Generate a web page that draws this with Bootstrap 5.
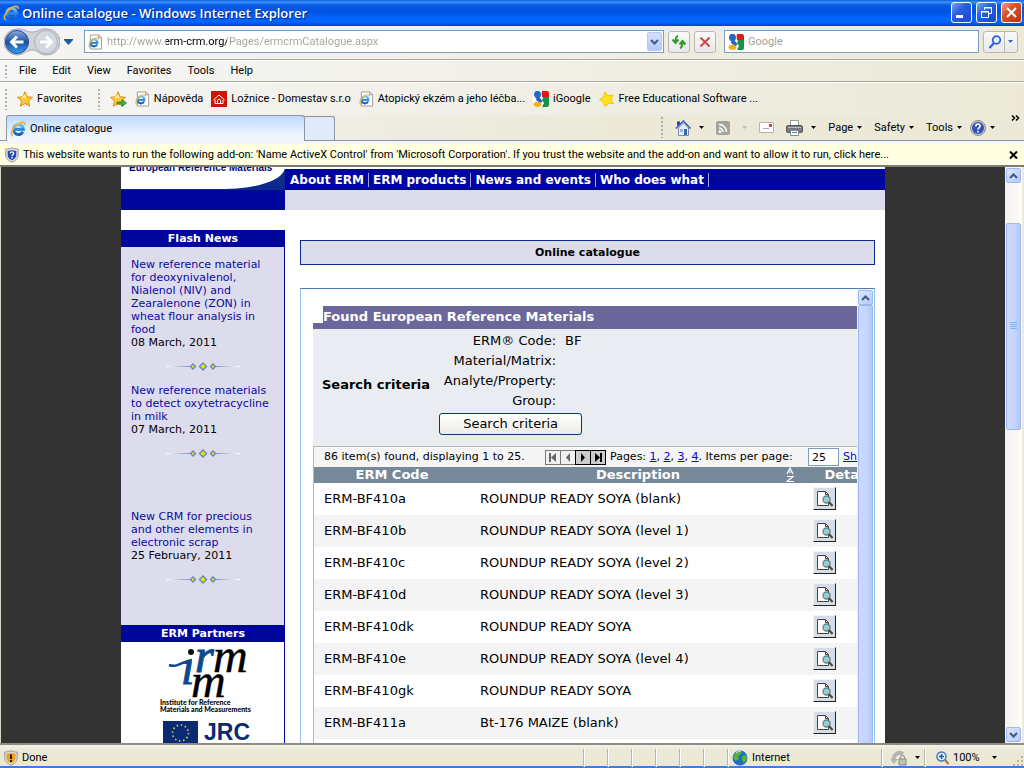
<!DOCTYPE html>
<html lang="en">
<head>
<meta charset="utf-8">
<meta name="viewport" content="width=device-width, initial-scale=1">
<title>Online catalogue - Windows Internet Explorer</title>
<link href="https://cdn.jsdelivr.net/npm/bootstrap@5.3.0/dist/css/bootstrap.min.css" rel="stylesheet">
<style>
:root { --navy:#00069c; --lav:#dddced; --ui:Roboto,sans-serif; --web:"DejaVu Sans",sans-serif; }
body { font-family:var(--ui); font-size:11px; line-height:14px; color:#000; background:#ece9d8; }
svg { display:block; flex:none; }
button { font:inherit; color:inherit; background:none; border:0; padding:0; flex:none; }
.win { height:100vh; min-width:1000px; }
.titlebar { height:26px; padding:0 2px 1px 3px; background:linear-gradient(#0a5be0 0,#3a93ff 2px,#0a5ae6 5px,#0053e1 12px,#0062fb 17px,#0066ff 22px,#0040c8 26px); color:#fff; }
.titlebar h1 { font:600 13px/18px "Open Sans",sans-serif; text-shadow:1px 1px 1px #00248c; margin:0 auto 0 3px; }
.cap { width:21px; height:21px; border:1px solid #fff; border-radius:3px; background:linear-gradient(135deg,#7fa4f4,#2a5fe0 40%,#1a48c8); }
.cap.shut { background:linear-gradient(135deg,#f0a08a,#dd5028 40%,#b8320c); }
.addrbar { height:34px; padding:0 6px 2px 4px; background:linear-gradient(90deg,#f4f4f4,#ece9d8); border-bottom:1px solid #a9a798; }
.hist { margin:0 11px 0 4px; }
.field { height:23px; border:1px solid #7f9db9; background:#fff; padding:0 1px 0 3px; }
.field input { border:0; outline:0; padding:0; min-width:0; font-size:11px; height:19px; }
.url { color:transparent; background:linear-gradient(90deg,#a5a294 59px,#000 59px,#000 120px,#a5a294 120px); -webkit-background-clip:text; background-clip:text; }
.search { width:255px; }
.search input::placeholder { color:#a5a294; opacity:1; }
.drop { width:15px; height:19px; border:1px solid #b8c8f4; border-radius:2px; background:linear-gradient(#d5e1fd,#b5c9f9); }
.tool { height:22px; min-width:22px; border:1px solid #b9b9b4; border-radius:3px; background:linear-gradient(#fafafa,#e8e8ea); }
.menubar { height:22px; padding-left:5px; border-top:1px solid #fff; border-bottom:1px solid #a9a798; background:linear-gradient(90deg,#f6f6f6,#ece9d8); }
.menubar a, .favs a, .cmds button { color:#000; text-decoration:none; }
.grip { width:2px; height:21px; flex:none; background:repeating-linear-gradient(#b0aea2 0 2px,transparent 2px 4px); }
.menubar .grip { height:13px; margin-right:-4px; }
.favs { height:33px; padding:0 5px; border-top:1px solid #fff; background:linear-gradient(90deg,#f5f5f4,#ece9d8); }
.favs .grip { margin-right:2px; }
.tabs { height:26px; padding-left:6px; border-bottom:1px solid #8e95a6; background:linear-gradient(90deg,#f3f3f2,#ece9d8 60%); }
.tab1 { width:299px; border:1px solid #8e95a6; border-bottom:0; border-radius:3px 3px 0 0; background:linear-gradient(#bedafc,#eef5fe 80%,#f4f7fc); padding-left:3px; margin-bottom:-1px; }
.tab2 { width:30px; border:1px solid #8e95a6; border-left:0; border-bottom:0; border-radius:0 3px 0 0; background:#e0ebfa; margin-top:1px; }
.cmds { padding-right:3px; }
.infobar { height:23px; margin-top:3px; padding:0 6px 0 5px; background:#ffffe1; border-bottom:2px solid #7e7c70; }
.band { background:#f4f4fa; }
.view { background:#333; border-left:1px solid #d8d5c6; border-right:2px solid #ece9d8; min-height:0; }
.site { width:764px; background:#fff; font-family:var(--web); overflow:hidden; }
.side { width:164px; flex:none; }
.logo { height:23px; overflow:hidden; color:#000a78; font:bold 10px/12px "Liberation Sans",sans-serif; background:#0a2a8e; }
.logo div { margin-top:-5px; height:27px; padding:0 0 0 8px; background:#fff; border-radius:0 0 60px 0 / 0 0 22px 0; white-space:nowrap; }
.navy { background:var(--navy); }
.lav { background:var(--lav); }
.h20 { height:20px; }
.topnav { height:21px; margin-top:2px; padding-left:1px; font-weight:bold; font-size:12px; line-height:14px; }
.topnav a { color:#fff; text-decoration:none; padding:0 4px; border-right:1px solid #a0a0d8; }
.head { font-weight:bold; font-size:11px; line-height:17px; color:#fff; text-align:center; margin:0; }
.boxed { border-right:1px solid var(--navy); }
.news { height:378px; padding:11px 10px 0; line-height:13px; }
.news a { color:#0a0aa0; text-decoration:none; display:block; }
.news svg { margin:13px auto; }
.news .older { padding-top:39px; }
.ctitle { margin-top:30px; height:25px; border:1px solid #0a2a8e; font-size:11px; line-height:23px; font-weight:bold; text-align:center; }
.pane { margin:0 10px 0 15px; min-width:0; }
.frame { margin-top:23px; border:1px solid #99c0f7; border-top-color:#4a7ab8; border-bottom:0; min-height:0; }
.inner { padding:17px 0 0 12px; overflow:hidden; min-width:0; font-size:13px; }
.inner h3 { background:#6b679b; color:#fff; font-size:13px; font-weight:bold; line-height:22px; height:23px; margin:0; border-left:10px solid #6b679b; border-image:linear-gradient(#fff 17px,#6b679b 17px) 0 0 0 10; }
.crit { background:#e9ecf1; height:117px; padding:0 0 10px 9px; gap:9px; }
.crit strong { padding-top:4px; }
.crit dl { display:grid; grid-template-columns:117px auto; column-gap:9px; line-height:20px; margin:0; text-align:right; }
.crit dt { font-weight:normal; } .crit dd { margin:0; text-align:left; }
.crit button { width:143px; height:22px; border:1px solid #003c74; border-radius:3px; background:linear-gradient(#fff,#ecebe5); margin-top:2px; }
.grid-wrap { width:584px; border:1px solid #b8b8b8; border-right:0; }
.pager { height:20px; background:#f5f5f5; font-size:11px; padding-left:10px; white-space:nowrap; }
.pager .found { width:221px; }
.pager label { width:200px; padding-left:5px; }
.pager .pb { width:16px; height:15px; border:1px solid #777; background:#f0f0f0; margin-right:-1px; color:#666; }
.pager .pb.on { border-color:#000; background:#ccc; color:#000; }
.pager a { color:#00f; }
.pager input { width:31px; height:18px; border:1px solid #7f9db9; font-size:11px; padding:0 3px; margin:0 4px 0 3px; }
.res { width:583px; table-layout:fixed; border-collapse:collapse; }
.res th { background:#778899; color:#fff; height:16px; line-height:16px; padding:0; text-align:center; }
.res td { height:32px; padding:0 10px; line-height:16px; }
.res tbody tr:nth-child(even) { background:#f4f4f4; }
.zoom { width:23px; height:23px; display:block; background:#d5dde6; border:1px solid; border-color:#f4f4f4 #222 #222 #f4f4f4; margin-top:-2px; }
.sb { width:17px; background:linear-gradient(90deg,#f3f1ec,#fefefb); padding:1px; flex:none; }
.sb .end { width:15px; height:15px; border:1px solid #9db8ee; border-radius:2px; background:linear-gradient(135deg,#dde7fe,#b4cbfb); }
.sb .thumb { border:1px solid #9db8ee; border-radius:2px; background:linear-gradient(90deg,#ccd9fe,#c4d5fd 60%,#b0c8fa); }
.frame .sb { padding-bottom:0; }
.frame .thumb { border-bottom:0; border-radius:2px 2px 0 0; }
.status { height:25px; padding-top:4px; border-top:2px solid #8e8c80; border-bottom:2px solid #3b7edb; background:linear-gradient(#f3f1e6,#ebe8d7 6px); }
.cell { width:24px; height:18px; border-left:1px solid #b8b5a4; flex:none; box-shadow:inset 1px 0 #fff; }
.zone { width:154px; } .prot { width:43px; } .zm { width:100px; padding-left:11px; }
</style>
</head>
<body>
<svg width="0" height="0" class="position-absolute" aria-hidden="true">
  <defs>
    <linearGradient id="gb" x2="0" y2="1"><stop stop-color="#6fc3f7"/><stop offset="1" stop-color="#0f5fc4"/></linearGradient>
    <linearGradient id="gn" x2="0" y2="1"><stop stop-color="#8da9d8"/><stop offset=".5" stop-color="#1c4fa8"/><stop offset="1" stop-color="#3aa0f0"/></linearGradient>
    <linearGradient id="gl"><stop stop-color="#fff"/><stop offset="1" stop-color="#6d86bb"/></linearGradient>
    <linearGradient id="gr"><stop stop-color="#6d86bb"/><stop offset="1" stop-color="#fff"/></linearGradient>
    <symbol id="ie" viewBox="0 0 16 16"><path d="M13 10.700A5 5 0 1 1 13.500 8.300H5" fill="none" stroke="url(#gb)" stroke-width="3"/><path d="M5 8.300h9" stroke="#2a86dc" stroke-width="2"/><path d="M3 15C-.8 14 2.500 6.500 8 3c3.500-2.200 7.500-2.500 7 .8" fill="none" stroke="#f0b030" stroke-width="1.600"/></symbol>
    <symbol id="page" viewBox="0 0 16 16"><path d="M2.500.5h9l3 3v12h-12z" fill="#fff" stroke="#999"/><path d="M11.500.5v3h3" fill="none" stroke="#999"/><use href="#ie" x="0" y="2.500" width="12" height="12"/></symbol>
    <symbol id="star" viewBox="0 0 16 16"><path d="M8 .8l2.200 5 5.300.5-4 3.600 1.200 5.300L8 12.500l-4.700 2.700 1.200-5.300-4-3.600 5.300-.5z" fill="#ffc83a" stroke="#d98e1c"/><path d="M8 3l1.300 4H4" fill="#ffe99a"/></symbol>
    <symbol id="goog" viewBox="0 0 16 16"><rect width="16" height="16" rx="2" fill="#fff"/><path d="M8 0h6a2 2 0 0 1 2 2v4H9z" fill="#e01818"/><path d="M9 6h7v8a2 2 0 0 1-2 2H8z" fill="#17924a"/><path d="M9 0l-1 4 2 3-1 2 2 3-2 4H7V0z" fill="#fff"/><ellipse cx="4.500" cy="3.500" rx="3.500" ry="3.700" fill="#2267c8"/><path d="M3.500 6.500h3l3 3.500-2 2.500L3 9z" fill="#2267c8"/><ellipse cx="4.500" cy="13.300" rx="4" ry="2.600" fill="#f5b018"/></symbol>
    <symbol id="tri" viewBox="0 0 5 3"><path d="M0 0h5L2.500 3z"/></symbol>
    <symbol id="chevD" viewBox="0 0 9 6"><path d="M1 1l3.500 3.500L8 1" fill="none" stroke="#43597f" stroke-width="2"/></symbol>
    <symbol id="chevU" viewBox="0 0 9 6"><path d="M1 5l3.500-3.500L8 5" fill="none" stroke="#43597f" stroke-width="2"/></symbol>
    <symbol id="shield" viewBox="0 0 14 16"><path d="M7 .7c2 1 4 1.300 6.200 1.300v6c0 3.500-3 6-6.200 7.300C3.800 14 .8 11.500.8 8V2C3 2 5 1.700 7 .7z" fill="#ddd" stroke="#999"/></symbol>
    <symbol id="rule" viewBox="0 0 74 9"><path d="M0 4h27v1H0z" fill="url(#gl)"/><path d="M47 4h27v1H47z" fill="url(#gr)"/><g fill="#d4f000" stroke="#6d86bb" stroke-width="1.400"><path d="M27 2l2.500 2.500L27 7l-2.500-2.500zM37 1l3.500 3.500L37 8l-3.500-3.500zM47 2l2.500 2.500L47 7l-2.500-2.500z"/></g></symbol>
    <symbol id="doc" viewBox="0 0 21 21"><path d="M3.500 3.500h8l3 3v11h-11z" fill="#fff" stroke="#444"/><path d="M11.500 3.500v3h3" fill="none" stroke="#444"/><circle cx="12.500" cy="11.500" r="3.500" fill="#a9c4c8" stroke="#777" stroke-width="1.300"/><path d="M11 11l2-2M12 13l1-1" stroke="#3ff" stroke-width="1.300"/><path d="M15 14l3.500 4" stroke="#444" stroke-width="2"/></symbol>
  </defs>
</svg>
<div class="win d-flex flex-column overflow-hidden">
  <header class="titlebar d-flex align-items-center flex-shrink-0">
    <svg width="16" height="16"><use href="#ie"/></svg>
    <h1>Online catalogue - Windows Internet Explorer</h1>
    <div class="d-flex gap-1">
      <button class="cap" aria-label="Minimize"><svg width="19" height="19"><path d="M4 12h7v3H4z" fill="#fff"/></svg></button>
      <button class="cap" aria-label="Restore"><svg width="19" height="19" fill="none" stroke="#fff"><path d="M7.500 7V4.500h7v6H12M7 5h8M4.500 8.500h7v6h-7zM4 9h8"/></svg></button>
      <button class="cap shut" aria-label="Close"><svg width="19" height="19"><path d="M5 5l9 9M14 5l-9 9" stroke="#fff" stroke-width="2"/></svg></button>
    </div>
  </header>

  <div class="addrbar d-flex align-items-center flex-shrink-0">
    <svg width="56" height="28" viewBox="0 0 56 28" role="img" aria-label="Back and Forward"><path d="M13 1c8-1 8 3 15 3s8-4 15-3a13 13 0 0 1 0 26c-8 0-9-5-15-5s-8 5-15 5A13 13 0 0 1 13 1z" fill="#d0d2d6" stroke="#aaa"/><circle cx="13" cy="14" r="11.500" fill="url(#gn)" stroke="#234a8c"/><path d="M19.500 14H8m5-5.500L7.500 14l5.500 5.500" fill="none" stroke="#fff" stroke-width="3"/><circle cx="42" cy="14" r="11.500" fill="#d3d8e0" stroke="#a9b0bd"/><path d="M36 14h11m-5-5.500l5.500 5.500-5.500 5.500" fill="none" stroke="#fff" stroke-width="3"/></svg>
    <svg class="hist" width="9" height="6"><path d="M0 0h9v1L4.500 6 0 1z" fill="#1e5a9a"/></svg>
    <div class="field d-flex align-items-center flex-grow-1 gap-1">
      <svg width="15" height="16"><use href="#page"/></svg>
      <input class="url flex-grow-1" type="text" aria-label="Address" value="http://www.erm-crm.org/Pages/ermcrmCatalogue.aspx">
      <button class="drop d-flex align-items-center justify-content-center" aria-label="Show addresses"><svg width="9" height="6"><use href="#chevD"/></svg></button>
    </div>
    <button class="tool ms-1 d-flex align-items-center justify-content-center" aria-label="Refresh"><svg width="16" height="16"><path d="M7 2C4.500 2.500 4.500 5 4.500 8M1.500 5.500l3 3.500 3-3.500" stroke="#2f9a2a" stroke-width="2" fill="none"/><path d="M9 14c2.500-.5 2.500-3 2.500-6M8.500 10.500l3-3.500 3 3.500" stroke="#2f9a2a" stroke-width="2" fill="none"/></svg></button>
    <button class="tool ms-1 me-2 d-flex align-items-center justify-content-center" aria-label="Stop"><svg width="12" height="12"><path d="M1.500 1.500l9 9M10.500 1.500l-9 9" stroke="#cc4a4a" stroke-width="2"/></svg></button>
    <div class="field search d-flex align-items-center gap-1 me-1"><svg width="16" height="16"><use href="#goog"/></svg><input type="text" class="flex-grow-1" placeholder="Google" aria-label="Search"></div>
    <button class="tool d-flex align-items-center px-1" aria-label="Search the web"><svg width="14" height="14"><circle cx="8.500" cy="5" r="3.800" fill="#e8f2ff" stroke="#2a62dc" stroke-width="1.800"/><path d="M6 8l-4.500 5" stroke="#2a62dc" stroke-width="2.200"/></svg><svg width="11" height="20"><path d="M2.500 0v20" stroke="#b9b9b4"/><path d="M6 8h5l-2.500 3z" fill="#2a62dc"/></svg></button>
  </div>

  <nav class="menubar d-flex align-items-center gap-3 flex-shrink-0" aria-label="Menu">
    <span class="grip"></span>
    <a href="#">File</a><a href="#">Edit</a><a href="#">View</a><a href="#">Favorites</a><a href="#">Tools</a><a href="#">Help</a>
  </nav>

  <nav class="favs d-flex align-items-center flex-shrink-0 gap-2" aria-label="Favorites bar">
    <span class="grip"></span>
    <a href="#" class="d-flex align-items-center gap-1 me-2"><svg width="16" height="16"><use href="#star"/></svg>Favorites</a>
    <span class="grip"></span>
    <a href="#" aria-label="Add to Favorites Bar"><svg width="17" height="16"><use href="#star" width="16" height="16"/><path d="M7 11h5V8.500l4.500 3.500-4.500 3.500V13H7z" fill="#3fb13a" stroke="#1f7a1f" stroke-width=".7"/></svg></a>
    <a href="#" class="d-flex align-items-center gap-1"><svg width="15" height="16"><use href="#page"/></svg>Nápověda</a>
    <a href="#" class="d-flex align-items-center gap-1"><svg width="16" height="16"><path d="M0 0h16v16H0z" fill="#d01408"/><path d="M2.500 9L8 4l5.500 5M4 9v3.500h8V9M6.500 12V9L8 8l1.500 1v3" fill="none" stroke="#fff"/></svg>Ložnice - Domestav s.r.o</a>
    <a href="#" class="d-flex align-items-center gap-1"><svg width="15" height="16"><use href="#page"/></svg>Atopický ekzém a jeho léčba...</a>
    <a href="#" class="d-flex align-items-center gap-1"><svg width="16" height="16"><use href="#goog"/></svg>iGoogle</a>
    <a href="#" class="d-flex align-items-center gap-1"><svg width="16" height="16"><path d="M6 .8l3 4 5-.8-2 4.500 2.500 4-5 .2L6 15.500 4.500 11 .5 8.500 4.500 6z" fill="#ffe11a" stroke="#f5c400"/></svg>Free Educational Software ...</a>
  </nav>

  <div class="tabs d-flex flex-shrink-0">
    <div class="tab1 d-flex align-items-center"><svg class="me-1" width="16" height="16"><use href="#ie"/></svg>Online catalogue</div>
    <div class="tab2"></div>
    <div class="cmds d-flex align-items-center ms-auto gap-2">
      <span class="grip me-1"></span>
      <button class="d-flex align-items-center gap-2" aria-label="Home"><svg width="16" height="16"><path d="M3.500 8v7.500h10V8l-5-5z" fill="#e8eef6" stroke="#7a8aa4"/><path d="M.8 8.500L8.500 1l7 7.500" fill="none" stroke="#3a5fb8" stroke-width="1.500"/><path d="M2 1.500h3V4L2 6z" fill="#2d3fc0"/><path d="M9 9h3v6H9z" fill="#2f6bb0"/><path d="M5 9h3v3H5z" fill="#9ab4d4"/></svg><svg width="5" height="3"><use href="#tri"/></svg></button>
      <button class="d-flex align-items-center gap-2 ms-1" aria-label="Feeds"><svg width="14" height="14" fill="none" stroke="#fff" stroke-width="1.500"><rect width="14" height="14" rx="2" fill="#a5a5a0" stroke="none"/><path d="M3 7a4 4 0 0 1 4 4M3 3.500A7.500 7.500 0 0 1 10.500 11"/><circle cx="4" cy="10.500" r=".8"/></svg><svg class="ms-1" width="5" height="3" fill="#bbb"><use href="#tri"/></svg></button>
      <button class="ms-1" aria-label="Read mail"><svg width="15" height="12"><path d="M.5.500h14v10H.5z" fill="#fdfdfd" stroke="#b4b4b4"/><path d="M10 2h3v3h-3z" fill="#d44"/><path d="M4 6.500h6" stroke="#aaa"/></svg></button>
      <button class="d-flex align-items-center gap-2 ms-1" aria-label="Print"><svg width="17" height="16"><path d="M4.500.5h8v5h-8z" fill="#fff" stroke="#999"/><rect x=".5" y="5.500" width="16" height="7" rx="1.500" fill="#777c84" stroke="#555"/><path d="M2 7.500h13" stroke="#bbb"/><path d="M4.500 10.500h8v5h-8z" fill="#fff" stroke="#888"/><path d="M6 12.500h5" stroke="#3a8ad0"/></svg><svg width="5" height="3"><use href="#tri"/></svg></button>
      <button class="d-flex align-items-center gap-1 ms-1">Page<svg width="5" height="3"><use href="#tri"/></svg></button>
      <button class="d-flex align-items-center gap-1 ms-1">Safety<svg width="5" height="3"><use href="#tri"/></svg></button>
      <button class="d-flex align-items-center gap-1 ms-1">Tools<svg width="5" height="3"><use href="#tri"/></svg></button>
      <button class="d-flex align-items-center gap-1" aria-label="Help"><svg width="16" height="16"><circle cx="8" cy="8" r="7.500" fill="#ccc" stroke="#888"/><circle cx="8" cy="8" r="6" fill="#2d52b8"/><path d="M5.800 6.500C5.800 3.200 10.200 3.500 10.200 6c0 1.500-2.200 1.700-2.200 3.500" fill="none" stroke="#fff" stroke-width="1.600"/><path d="M7.200 10.800h1.600v1.600H7.200z" fill="#fff"/></svg><svg width="5" height="3"><use href="#tri"/></svg></button>
      <button class="ms-2 align-self-start" aria-label="More"><svg width="10" height="7"><path d="M1 .5l2.500 2.500L1 5.500M5 .5l2.500 2.500L5 5.500" fill="none" stroke="#000" stroke-width="1.500"/></svg></button>
    </div>
  </div>

  <div class="band flex-shrink-0"><div class="infobar d-flex align-items-center">
    <svg class="me-1" width="14" height="16"><use href="#shield"/><path d="M7 3c1.500.7 3 .9 4.300.9V8c0 2.500-2 4.200-4.300 5.300C4.700 12.200 2.700 10.500 2.700 8V3.900C4 3.900 5.500 3.700 7 3z" fill="#2348b4"/><path d="M5.300 6.500c0-2.500 3.400-2 3.400 0 0 1.200-1.700 1.200-1.700 2.700M7 10v1.500" fill="none" stroke="#fff" stroke-width="1.300"/></svg>
    <span>This website wants to run the following add-on: 'Name ActiveX Control' from 'Microsoft Corporation'. If you trust the website and the add-on and want to allow it to run, click here...</span>
    <button class="ms-auto" aria-label="Close information bar"><svg width="9" height="8"><path d="M1 .5l7 7M8 .5l-7 7" stroke="#000" stroke-width="2"/></svg></button>
  </div></div>

  <main class="view flex-grow-1 d-flex">
    <div class="flex-grow-1 d-flex justify-content-center overflow-hidden">
      <div class="site d-flex flex-column">
        <div class="d-flex flex-shrink-0">
          <div class="side"><div class="logo"><div>European Reference Materials</div></div><div class="navy h20"></div></div>
          <div class="flex-grow-1">
            <nav class="topnav navy d-flex align-items-center" aria-label="Site"><a href="#">About ERM</a><a href="#">ERM products</a><a href="#">News and events</a><a href="#">Who does what</a></nav>
            <div class="lav h20"></div>
          </div>
        </div>
        <div class="d-flex flex-grow-1" style="min-height:0">
          <aside class="side d-flex flex-column pt-1">
            <h2 class="head navy mt-3">Flash News</h2>
            <div class="news lav boxed flex-shrink-0">
              <a href="#">New reference material for deoxynivalenol, Nialenol (NIV) and Zearalenone (ZON) in wheat flour analysis in food</a>08 March, 2011
              <svg width="74" height="9"><use href="#rule"/></svg>
              <a href="#">New reference materials to detect oxytetracycline in milk</a>07 March, 2011
              <svg width="74" height="9"><use href="#rule"/></svg>
              <a href="#" class="older">New CRM for precious and other elements in electronic scrap</a>25 February, 2011
              <svg width="74" height="9"><use href="#rule"/></svg>
            </div>
            <h2 class="head navy">ERM Partners</h2>
            <div class="boxed flex-grow-1 overflow-hidden">
              <svg class="mx-auto" width="100" height="101" role="img" aria-label="IRMM and JRC">
                <g font-family="Liberation Serif,serif" font-style="italic"><text x="28" y="42" font-size="48" fill="#0b4a8f" stroke="#0b4a8f">ı</text><text x="42" y="30" font-size="48" fill="#0b4a8f" stroke="#0b4a8f">r</text><text x="60" y="30" font-size="48" stroke="#000" stroke-width=".5">m</text><text x="38" y="55" font-size="48" stroke="#000" stroke-width=".5">m</text></g>
                <circle cx="38" cy="10" r="3" fill="#111"/>
                <path d="M16 23c8 3 12-3 23-5" stroke="#0b4a8f" stroke-width="2.500" fill="none"/>
                <g font-family="Lato,sans-serif" font-weight="900" font-size="7"><text x="7" y="63">Institute for Reference</text><text x="7" y="70">Materials and Measurements</text></g>
                <path d="M10 79h35v24H10z" fill="#0a2a72"/><circle cx="27.500" cy="91" r="8" fill="none" stroke="#cfd860" stroke-width="1.600" stroke-dasharray="1.500 2.690"/>
                <text x="51" y="98" font-family="Liberation Sans,sans-serif" font-weight="bold" font-size="23" fill="#0a2a72">JRC</text>
              </svg>
            </div>
          </aside>
          <section class="pane flex-grow-1 d-flex flex-column">
            <h2 class="ctitle lav flex-shrink-0 mb-0">Online catalogue</h2>
            <div class="frame d-flex flex-grow-1">
              <div class="inner flex-grow-1">
                <h3>Found European Reference Materials</h3>
                <div class="crit d-flex align-items-center">
                  <strong>Search criteria</strong>
                  <div>
                    <dl><dt>ERM® Code:</dt><dd>BF</dd><dt>Material/Matrix:</dt><dd></dd><dt>Analyte/Property:</dt><dd></dd><dt>Group:</dt><dd></dd></dl>
                    <button>Search criteria</button>
                  </div>
                </div>
                <div class="grid-wrap">
                  <div class="pager d-flex align-items-center">
                    <span class="found">86 item(s) found, displaying 1 to 25.</span>
                    <button class="pb" aria-label="First"><svg width="14" height="13" fill="currentColor"><path d="M3 2h2v9H3zM10 2v9L5 6.500z"/></svg></button>
                    <button class="pb" aria-label="Previous"><svg width="14" height="13" fill="currentColor"><path d="M9 2v9L5 6.500z"/></svg></button>
                    <button class="pb on" aria-label="Next"><svg width="14" height="13" fill="currentColor"><path d="M5 2v9l4-4.500z"/></svg></button>
                    <button class="pb on" aria-label="Last"><svg width="14" height="13" fill="currentColor"><path d="M4 2v9l5-4.500zM9 2h2v9H9z"/></svg></button>
                    <label for="ipp">Pages: <a href="#">1</a>, <a href="#">2</a>, <a href="#">3</a>, <a href="#">4</a>. Items per page:</label>
                    <input id="ipp" type="text" value="25"><a href="#">Show</a>
                  </div>
                  <table class="res">
                    <colgroup><col style="width:156px"><col style="width:333px"><col></colgroup>
                    <thead><tr><th>ERM Code</th><th><span class="d-flex align-items-center"><span class="flex-grow-1 ps-3 ms-1">Description</span><svg class="me-2" width="9" height="16" fill="none" stroke="#fff" stroke-width="1.200"><path d="M1 7l3-6 3 6M2 5h4M1 9.500h6l-6 5h7"/></svg></span></th><th>Details</th></tr></thead>
                    <tbody>
                      <tr><td>ERM-BF410a</td><td>ROUNDUP READY SOYA (blank)</td><td><button class="zoom" aria-label="Details"><svg width="21" height="21"><use href="#doc"/></svg></button></td></tr>
                      <tr><td>ERM-BF410b</td><td>ROUNDUP READY SOYA (level 1)</td><td><button class="zoom" aria-label="Details"><svg width="21" height="21"><use href="#doc"/></svg></button></td></tr>
                      <tr><td>ERM-BF410c</td><td>ROUNDUP READY SOYA (level 2)</td><td><button class="zoom" aria-label="Details"><svg width="21" height="21"><use href="#doc"/></svg></button></td></tr>
                      <tr><td>ERM-BF410d</td><td>ROUNDUP READY SOYA (level 3)</td><td><button class="zoom" aria-label="Details"><svg width="21" height="21"><use href="#doc"/></svg></button></td></tr>
                      <tr><td>ERM-BF410dk</td><td>ROUNDUP READY SOYA</td><td><button class="zoom" aria-label="Details"><svg width="21" height="21"><use href="#doc"/></svg></button></td></tr>
                      <tr><td>ERM-BF410e</td><td>ROUNDUP READY SOYA (level 4)</td><td><button class="zoom" aria-label="Details"><svg width="21" height="21"><use href="#doc"/></svg></button></td></tr>
                      <tr><td>ERM-BF410gk</td><td>ROUNDUP READY SOYA</td><td><button class="zoom" aria-label="Details"><svg width="21" height="21"><use href="#doc"/></svg></button></td></tr>
                      <tr><td>ERM-BF411a</td><td>Bt-176 MAIZE (blank)</td><td><button class="zoom" aria-label="Details"><svg width="21" height="21"><use href="#doc"/></svg></button></td></tr>
                      <tr><td></td><td></td><td><button class="zoom" aria-label="Details"><svg width="21" height="21"><use href="#doc"/></svg></button></td></tr>
                    </tbody>
                  </table>
                </div>
              </div>
              <div class="sb d-flex flex-column">
                <button class="end d-flex align-items-center justify-content-center" aria-label="Scroll list up"><svg width="9" height="6"><use href="#chevU"/></svg></button>
                <div class="thumb flex-grow-1"></div>
              </div>
            </div>
          </section>
        </div>
      </div>
    </div>
    <div class="sb d-flex flex-column">
      <button class="end d-flex align-items-center justify-content-center" aria-label="Scroll up"><svg width="9" height="6"><use href="#chevU"/></svg></button>
      <div style="height:7%"></div>
      <div class="thumb d-flex align-items-center justify-content-center" style="height:36%"><svg width="7" height="8"><path d="M0 .5h7M0 2.500h7M0 4.500h7M0 6.500h7" stroke="#8cb0f8"/></svg></div>
      <button class="end mt-auto d-flex align-items-center justify-content-center" aria-label="Scroll down"><svg width="9" height="6"><use href="#chevD"/></svg></button>
    </div>
  </main>

  <footer class="status d-flex align-items-center flex-shrink-0">
    <svg class="ms-1" width="14" height="16"><use href="#shield"/><path d="M7 2.800c1.500.7 3 1 4.500 1V8c0 2.500-2 4.300-4.500 5.500C4.500 12.300 2.500 10.500 2.500 8V3.800c1.500 0 3-.3 4.500-1z" fill="#f0a020"/><path d="M7 4.500v4.500M7 10v2" stroke="#111" stroke-width="1.800"/></svg>
    <span class="ms-1">Done</span>
    <span class="cell ms-auto"></span><span class="cell"></span><span class="cell"></span><span class="cell"></span><span class="cell"></span><span class="cell"></span>
    <span class="cell ps-1 d-flex align-items-center gap-1 zone"><svg width="16" height="16"><circle cx="8" cy="8" r="7.500" fill="#2468c8"/><path d="M2 5c2-4 6-4.500 8-3L8 5 6 6l1 3-3 2-3-3zM10 6l4-1 1 4-3 4-2-3z" fill="#4fb83c"/><path d="M4 3c2-2 4-2 5-1.500" stroke="#cfe8ff" fill="none"/></svg>Internet</span>
    <span class="cell ps-2 d-flex align-items-center gap-2 prot"><svg width="17" height="16"><path d="M4 11A6 6 0 0 1 13 4" fill="none" stroke="#b4b4b0" stroke-width="4"/><path d="M0 9h8l-4 5z" fill="#b4b4b0"/><path d="M9 9h7v6H9z" fill="#c0c0bc" stroke="#888"/><path d="M10.500 9V7.500a2 2 0 0 1 4 0V9" fill="none" stroke="#888"/></svg><svg width="5" height="3"><use href="#tri"/></svg></span>
    <span class="cell d-flex align-items-center gap-1 zm"><svg width="13" height="14"><circle cx="5.500" cy="5.500" r="4.500" fill="#eaf4ff" stroke="#3a7ac8" stroke-width="1.500"/><path d="M3 5.500h5M5.500 3v5" stroke="#1c56b8" stroke-width="1.500"/><path d="M9 9l3.500 4" stroke="#a07050" stroke-width="2"/></svg>100%<svg class="ms-2" width="5" height="3"><use href="#tri"/></svg>
    <svg class="ms-auto align-self-end" width="11" height="11" fill="#b8b5a4"><path d="M8 0h2v2H8zM8 4h2v2H8zM8 8h2v2H8zM4 4h2v2H4zM4 8h2v2H4zM0 8h2v2H0z"/></svg></span>
  </footer>
</div>
<script src="https://cdn.jsdelivr.net/npm/bootstrap@5.3.0/dist/js/bootstrap.bundle.min.js"></script>
</body>
</html>
